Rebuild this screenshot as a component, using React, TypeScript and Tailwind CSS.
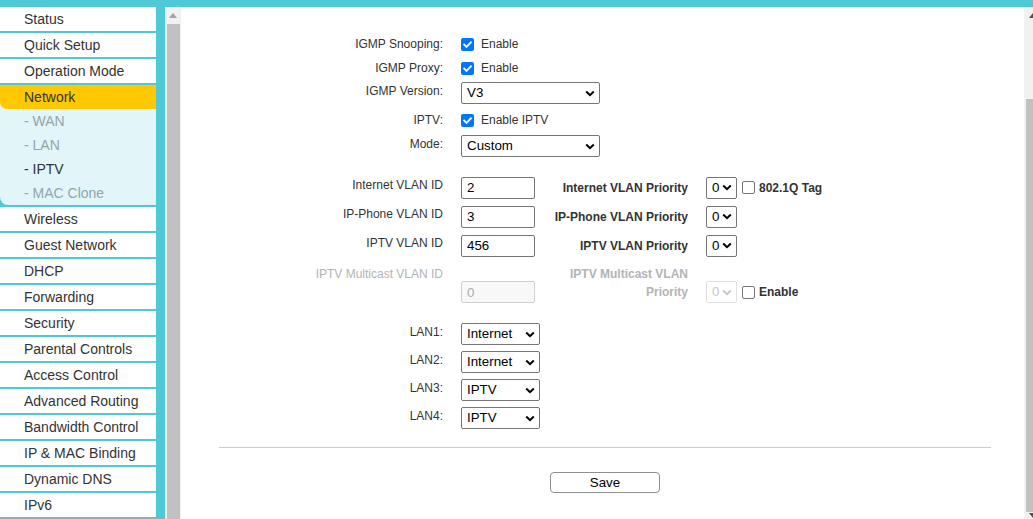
import React from "react";

const menuTop = ["Status", "Quick Setup", "Operation Mode"];
const subItems = [
  { label: "- WAN", active: false },
  { label: "- LAN", active: false },
  { label: "- IPTV", active: true },
  { label: "- MAC Clone", active: false },
];
const menuBottom = [
  "Wireless",
  "Guest Network",
  "DHCP",
  "Forwarding",
  "Security",
  "Parental Controls",
  "Access Control",
  "Advanced Routing",
  "Bandwidth Control",
  "IP & MAC Binding",
  "Dynamic DNS",
  "IPv6",
];

function Checkbox({ checked }: { checked: boolean }) {
  if (checked) {
    return (
      <div className="w-[13px] h-[13px] rounded-[2px] bg-[#0075ff] flex items-center justify-center shrink-0">
        <svg width="11" height="11" viewBox="0 0 11 11">
          <path d="M2.2 5.6 L4.5 7.9 L8.9 3.3" stroke="white" strokeWidth="1.9" fill="none" strokeLinecap="square" />
        </svg>
      </div>
    );
  }
  return <div className="w-[13px] h-[13px] rounded-[2px] border border-[#767676] bg-white shrink-0" />;
}

function Select({ value, w, disabled }: { value: string; w: string; disabled?: boolean }) {
  return (
    <div
      className={`${w} h-[22px] shrink-0 border rounded-[2px] flex items-center justify-between pl-[5px] pr-[4px] text-[13.33px] bg-white ${
        disabled ? "border-[#e0e0e0] text-[#c8c8c8]" : "border-[#767676] text-black"
      }`}
    >
      <span>{value}</span>
      <svg width="10" height="7" viewBox="0 0 10 7">
        <path d="M1.2 1.5 L5 5.2 L8.8 1.5" stroke="currentColor" strokeWidth="2" fill="none" />
      </svg>
    </div>
  );
}

function TextBox({ value, disabled }: { value: string; disabled?: boolean }) {
  return (
    <input
      readOnly
      value={value}
      disabled={disabled}
      className={`w-[74px] h-[22px] shrink-0 border rounded-[2px] px-[5px] text-[13.33px] outline-none ${
        disabled ? "border-[#cfcfcf] bg-[#f8f8f8] text-[#aaaaaa]" : "border-[#767676] bg-white text-black"
      }`}
    />
  );
}

function CheckRow({ label, text }: { label: string; text: string }) {
  return (
    <div className="flex items-center h-[24px]">
      <div className="w-[262px] text-right shrink-0">{label}</div>
      <div className="ml-[18px] flex items-center">
        <Checkbox checked />
        <span className="ml-[7px]">{text}</span>
      </div>
    </div>
  );
}

function VlanRow({
  label,
  value,
  prio,
  extra,
}: {
  label: string;
  value: string;
  prio: string;
  extra?: React.ReactNode;
}) {
  return (
    <div className="flex items-center h-[29px]">
      <div className="w-[262px] text-right shrink-0 mb-[5px]">{label}</div>
      <div className="ml-[18px]">
        <TextBox value={value} />
      </div>
      <div className="w-[153px] text-right font-bold shrink-0">{prio}</div>
      <div className="ml-[18px]">
        <Select value="0" w="w-[31px]" />
      </div>
      {extra}
    </div>
  );
}

function LanRow({ label, value }: { label: string; value: string }) {
  return (
    <div className="flex items-center h-[28px]">
      <div className="w-[262px] text-right shrink-0 mb-[4px]">{label}</div>
      <div className="ml-[18px]">
        <Select value={value} w="w-[79px]" />
      </div>
    </div>
  );
}

export default function App() {
  return (
    <div className="w-[1033px] h-[519px] overflow-hidden flex flex-col bg-[#4fc9d5] font-['Liberation_Sans',Arial,sans-serif]">
      <div className="h-[7px] shrink-0" />
      <div className="flex flex-1 min-h-0">
        {/* Sidebar menu */}
        <aside className="w-[156px] shrink-0 flex flex-col gap-[2px] text-[14px] text-[#333333]">
          {menuTop.map((m) => (
            <div key={m} className="h-[24px] shrink-0 bg-white flex items-center pl-[24px]">
              {m}
            </div>
          ))}
          <div className="shrink-0 bg-[#e2f5f8] rounded-bl-[8px]">
            <div className="h-[24px] bg-[#ffc800] rounded-bl-[7px] flex items-center pl-[24px]">Network</div>
            {subItems.map((s) => (
              <div
                key={s.label}
                className={`h-[24px] flex items-center pl-[24px] ${s.active ? "text-[#333333]" : "text-[#93a6a8]"}`}
              >
                {s.label}
              </div>
            ))}
          </div>
          {menuBottom.map((m) => (
            <div key={m} className="h-[24px] shrink-0 bg-white flex items-center pl-[24px]">
              {m}
            </div>
          ))}
        </aside>
        <div className="w-[9px] shrink-0" />
        {/* Sidebar scrollbar */}
        <div className="w-[16px] shrink-0 bg-[#f1f1f1] flex flex-col items-center">
          <div className="h-[17px] flex items-center justify-center">
            <svg width="8" height="5" viewBox="0 0 8 5">
              <path d="M0 5 L4 0 L8 5 Z" fill="#a3a3a3" />
            </svg>
          </div>
          <div className="w-[13px] flex-1 bg-[#c1c1c1]" />
        </div>

        {/* Main content */}
        <main className="flex-1 bg-white text-[12px] text-[#333333] pt-[25px]">
          <CheckRow label="IGMP Snooping:" text="Enable" />
          <CheckRow label="IGMP Proxy:" text="Enable" />
          <div className="flex items-center h-[26px]">
            <div className="w-[262px] text-right shrink-0 mb-[4px]">IGMP Version:</div>
            <div className="ml-[18px]">
              <Select value="V3" w="w-[139px]" />
            </div>
          </div>
          <div className="flex items-center h-[28px]">
            <div className="w-[262px] text-right shrink-0">IPTV:</div>
            <div className="ml-[18px] flex items-center">
              <Checkbox checked />
              <span className="ml-[7px]">Enable IPTV</span>
            </div>
          </div>
          <div className="flex items-center h-[24px]">
            <div className="w-[262px] text-right shrink-0 mb-[4px]">Mode:</div>
            <div className="ml-[18px]">
              <Select value="Custom" w="w-[139px]" />
            </div>
          </div>

          <div className="mt-[15px]">
            <VlanRow
              label="Internet VLAN ID"
              value="2"
              prio="Internet VLAN Priority"
              extra={
                <div className="ml-[5px] flex items-center">
                  <Checkbox checked={false} />
                  <span className="ml-[4px] font-bold">802.1Q Tag</span>
                </div>
              }
            />
            <VlanRow label="IP-Phone VLAN ID" value="3" prio="IP-Phone VLAN Priority" />
            <VlanRow label="IPTV VLAN ID" value="456" prio="IPTV VLAN Priority" />
            <div className="flex items-end mt-[5px] h-[38px]">
              <div className="w-[262px] text-right shrink-0 self-start leading-[18px] text-[#b3b3b3]">
                IPTV Multicast VLAN ID
              </div>
              <div className="ml-[18px]">
                <TextBox value="0" disabled />
              </div>
              <div className="w-[153px] text-right font-bold shrink-0 self-start leading-[18px] text-[#b3b3b3]">
                IPTV Multicast VLAN
                <br />
                Priority
              </div>
              <div className="ml-[18px] flex items-center h-[22px]">
                <Select value="0" w="w-[31px]" disabled />
                <div className="ml-[5px] flex items-center">
                  <Checkbox checked={false} />
                  <span className="ml-[4px] font-bold">Enable</span>
                </div>
              </div>
            </div>
          </div>

          <div className="mt-[17px]">
            <LanRow label="LAN1:" value="Internet" />
            <LanRow label="LAN2:" value="Internet" />
            <LanRow label="LAN3:" value="IPTV" />
            <LanRow label="LAN4:" value="IPTV" />
          </div>

          <div className="mt-[15px] ml-[38px] mr-[33px] h-px bg-[#cccccc]" />
          <div className="mt-[24px] ml-[38px] mr-[33px] flex justify-center">
            <button className="w-[110px] h-[21px] border border-[#8f8f8f] rounded-[4px] bg-white text-[13.33px] text-black">
              Save
            </button>
          </div>
        </main>

        {/* Main scrollbar (partly cut off) */}
        <div className="w-[9px] shrink-0 overflow-hidden bg-[#f1f1f1]">
          <div className="w-[17px] h-full flex flex-col items-center">
            <div className="h-[17px] flex items-center justify-center">
              <svg width="8" height="5" viewBox="0 0 8 5">
                <path d="M0 5 L4 0 L8 5 Z" fill="#505050" />
              </svg>
            </div>
            <div className="h-[75px]" />
            <div className="w-[13px] h-[413px] bg-[#c1c1c1]" />
            <div className="flex-1 flex items-center justify-center">
              <svg width="8" height="5" viewBox="0 0 8 5">
                <path d="M0 0 L4 5 L8 0 Z" fill="#505050" />
              </svg>
            </div>
          </div>
        </div>
      </div>
    </div>
  );
}
